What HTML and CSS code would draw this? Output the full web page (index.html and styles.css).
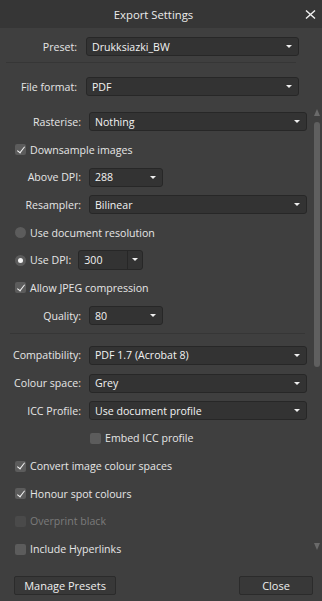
FILE: index.html
```html
<!DOCTYPE html>
<html lang="en">
<head>
    <meta charset="UTF-8">
    <meta name="viewport" content="width=device-width, initial-scale=1.0">
    <title>Export Settings</title>
    <link rel="stylesheet" href="styles.css">
</head>
<body>
    <div class="dialog">
        <div class="titlebar">
            <span class="title">Export Settings</span>
            <svg class="close" width="11" height="9" viewBox="0 0 11 9">
                <path d="M1 0.5 L10 8.5 M10 0.5 L1 8.5" stroke="#f0f0f0" stroke-width="1.4" fill="none"/>
            </svg>
        </div>

        <div class="top">
            <div class="field">
                <div class="label">Preset:</div>
                <div class="select">Drukksiazki_BW<span class="caret"></span></div>
            </div>
            <div class="sep top-sep"></div>
            <div class="field">
                <div class="label">File format:</div>
                <div class="select">PDF<span class="caret"></span></div>
            </div>
        </div>

        <div class="scroll">
            <div class="content">
                <div class="row field">
                    <div class="label">Rasterise:</div>
                    <div class="select">Nothing<span class="caret"></span></div>
                </div>
                <div class="row check-row">
                    <span class="box checked"></span>Downsample images
                </div>
                <div class="row field">
                    <div class="label">Above DPI:</div>
                    <div class="select small">288<span class="caret"></span></div>
                </div>
                <div class="row field">
                    <div class="label">Resampler:</div>
                    <div class="select">Bilinear<span class="caret"></span></div>
                </div>
                <div class="row check-row">
                    <span class="radio"></span>Use document resolution
                </div>
                <div class="row check-row">
                    <span class="radio on"></span>Use DPI:
                    <div class="spin">
                        <span class="spin-value">300</span>
                        <span class="spin-btn"><span class="caret"></span></span>
                    </div>
                </div>
                <div class="row check-row">
                    <span class="box checked"></span>Allow JPEG compression
                </div>
                <div class="row field">
                    <div class="label">Quality:</div>
                    <div class="select small">80<span class="caret"></span></div>
                </div>

                <div class="sep mid-sep"></div>

                <div class="row field">
                    <div class="label">Compatibility:</div>
                    <div class="select">PDF 1.7 (Acrobat 8)<span class="caret"></span></div>
                </div>
                <div class="row field">
                    <div class="label">Colour space:</div>
                    <div class="select">Grey<span class="caret"></span></div>
                </div>
                <div class="row field">
                    <div class="label">ICC Profile:</div>
                    <div class="select">Use document profile<span class="caret"></span></div>
                </div>
                <div class="row check-row indented">
                    <span class="box"></span>Embed ICC profile
                </div>
                <div class="row check-row">
                    <span class="box checked"></span>Convert image colour spaces
                </div>
                <div class="row check-row">
                    <span class="box checked"></span>Honour spot colours
                </div>
                <div class="row check-row disabled">
                    <span class="box"></span>Overprint black
                </div>
                <div class="row check-row">
                    <span class="box"></span>Include Hyperlinks
                </div>
            </div>
            <div class="scrollbar">
                <span class="arrow up"></span>
                <span class="thumb"></span>
                <span class="arrow down"></span>
            </div>
        </div>

        <div class="footer">
            <button class="btn manage">Manage Presets</button>
            <button class="btn close-btn">Close</button>
        </div>
    </div>
</body>
</html>
```

FILE: styles.css
```css
body {
    margin: 0;
    font-family: 'Open Sans', 'Noto Sans', sans-serif;
    font-size: 10.6px;
    color: #e6e6e6;
    background-color: #3f3f3f;
}
.dialog {
    width: 322px;
    height: 601px;
    display: flex;
    flex-direction: column;
    background-color: #3f3f3f;
    overflow: hidden;
}
.titlebar {
    height: 28px;
    flex: none;
    display: flex;
    align-items: center;
    justify-content: center;
    position: relative;
    padding-right: 15px;
    background-color: #363636;
    font-size: 11.3px;
    color: #ececec;
}
.close {
    position: absolute;
    right: 6px;
    top: 10px;
}

/* fixed part above the scroll area */
.top {
    flex: none;
    padding: 9px 0 8px 0;
}
.field {
    display: flex;
    align-items: center;
}
.top .field {
    height: 19px;
}
.top .label {
    width: 77px;
    margin-right: 9px;
}
.top .select {
    width: 213px;
}
.label {
    text-align: right;
    white-space: nowrap;
    flex: none;
}
.select {
    box-sizing: border-box;
    height: 19px;
    display: flex;
    align-items: center;
    position: relative;
    padding-left: 5px;
    background-color: #333333;
    border: 1px solid #272727;
    border-radius: 3px;
    color: #f2f2f2;
    white-space: nowrap;
}
.caret {
    position: absolute;
    right: 6px;
    top: 7px;
    width: 0;
    height: 0;
    border-left: 3px solid transparent;
    border-right: 3px solid transparent;
    border-top: 3px solid #f0f0f0;
}
.sep {
    height: 1px;
    background-color: #363636;
}
.top-sep {
    margin: 6px 26px 14px 6px;
}

/* scroll area */
.scroll {
    flex: 1;
    display: flex;
    min-height: 0;
    overflow: hidden;
}
.content {
    width: 312px;
    padding-top: 4px;
}
.row {
    height: 27.7px;
}
.content .label {
    width: 81px;
    margin-right: 8px;
}
.content .select {
    width: 218px;
}
.content .select.small {
    width: 74px;
}
.mid-sep {
    margin: 3px 7px 8px 10px;
}
.check-row {
    display: flex;
    align-items: center;
    padding-left: 15px;
    white-space: nowrap;
}
.check-row.indented {
    padding-left: 90px;
}
.check-row.disabled {
    color: #7b7b7b;
}
.box {
    box-sizing: border-box;
    width: 11px;
    height: 11px;
    margin-right: 4px;
    border-radius: 2px;
    background-color: #5c5c5c;
    position: relative;
    flex: none;
}
.disabled .box {
    background-color: #4a4a4a;
}
.box.checked::after {
    content: "";
    position: absolute;
    left: 3.5px;
    top: 0.5px;
    width: 3px;
    height: 7px;
    border-right: 1.6px solid #f4f4f4;
    border-bottom: 1.6px solid #f4f4f4;
    transform: rotate(38deg);
}
.radio {
    width: 11px;
    height: 11px;
    margin-right: 4px;
    border-radius: 50%;
    background-color: #5c5c5c;
    position: relative;
    flex: none;
}
.radio.on::after {
    content: "";
    position: absolute;
    left: 3px;
    top: 3px;
    width: 5px;
    height: 5px;
    border-radius: 50%;
    background-color: #f4f4f4;
}
.spin {
    box-sizing: border-box;
    display: flex;
    width: 65px;
    height: 20px;
    margin-left: 7px;
    background-color: #333333;
    border: 1px solid #272727;
    border-radius: 3px;
}
.spin-value {
    flex: 1;
    display: flex;
    align-items: center;
    padding-left: 5px;
    color: #f2f2f2;
}
.spin-btn {
    width: 14px;
    position: relative;
    border-left: 1px solid #272727;
}
.spin-btn .caret {
    right: 4px;
    top: 7px;
}
.scrollbar {
    width: 10px;
    display: flex;
    flex-direction: column;
    align-items: center;
    padding: 5px 0 12px 0;
}
.arrow {
    width: 0;
    height: 0;
    border-left: 3px solid transparent;
    border-right: 3px solid transparent;
}
.arrow.up {
    border-bottom: 7px solid #6a6a6a;
}
.arrow.down {
    margin-top: auto;
    border-top: 7px solid #6a6a6a;
}
.thumb {
    width: 6px;
    height: 245px;
    margin-top: 6px;
    border-radius: 3px;
    background-color: #5f5f5f;
}

/* buttons */
.footer {
    flex: none;
    display: flex;
    justify-content: space-between;
    padding: 14px 9px 6px 14px;
}
.btn {
    height: 19px;
    padding: 0;
    font-family: inherit;
    font-size: 11px;
    color: #eeeeee;
    background-color: #383838;
    border: 1px solid #2b2b2b;
    border-radius: 2px;
}
.manage {
    width: 102px;
}
.close-btn {
    width: 74px;
}
```
